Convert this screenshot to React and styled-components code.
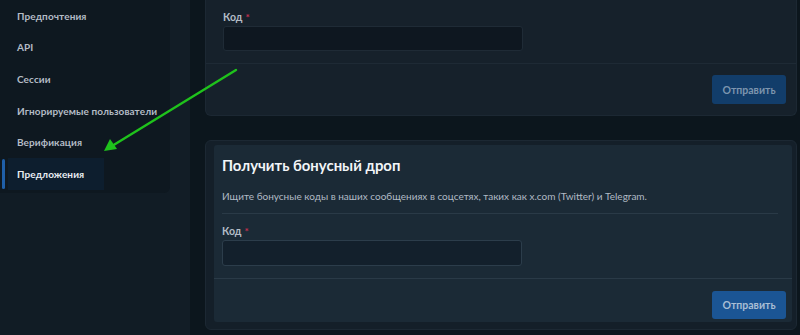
import React from "react";
import styled, { createGlobalStyle } from "styled-components";

const Global = createGlobalStyle`
  html, body { margin: 0; padding: 0; background: #111c25; }
  body { font-family: Lato, "Noto Sans", sans-serif; overflow: hidden; }
  * { box-sizing: border-box; }
`;

const Page = styled.div`
  position: relative;
  width: 800px;
  height: 335px;
  display: flex;
  align-items: flex-start;
  overflow: hidden;
`;

const Sidebar = styled.nav`
  width: 170px;
  margin-top: -8px;
  padding: 8px 0 3px 0;
  background: #0e1820;
  border-radius: 0 0 6px 0;
  display: flex;
  flex-direction: column;
`;

const NavItem = styled.div`
  position: relative;
  height: 31.6px;
  display: flex;
  align-items: center;
  font-size: 10px;
  font-weight: 700;
  letter-spacing: 0.1px;
  color: ${(p) => (p.$active ? "#e8edf3" : "#b4bcc6")};
  background: ${(p) => (p.$active ? "#0d1e2e" : "transparent")};
  margin-left: ${(p) => (p.$active ? "8px" : "0")};
  padding-left: ${(p) => (p.$active ? "9px" : "17px")};
  width: ${(p) => (p.$active ? "96px" : "auto")};
  &::before {
    content: "";
    display: ${(p) => (p.$active ? "block" : "none")};
    position: absolute;
    left: -6px;
    top: 1px;
    bottom: 1px;
    width: 3px;
    border-radius: 2px;
    background: #1f5fa8;
  }
`;

const Gutter = styled.div`
  width: 20px;
  align-self: stretch;
  background: #121d26;
`;

const Main = styled.main`
  flex: 1;
  align-self: stretch;
  background: #0c161d;
  padding: 0 3px 0 15px;
  display: flex;
  flex-direction: column;
  gap: 24px;
`;

const Card = styled.section`
  background: ${(p) => (p.$highlight ? "#141f29" : "#16212b")};
  border: 1px solid #1c2833;
  border-radius: ${(p) => (p.$cut ? "0 0 6px 6px" : "6px")};
  border-top: ${(p) => (p.$cut ? "none" : "1px solid #1c2833")};
  margin-top: ${(p) => (p.$cut ? "-10px" : "0")};
  padding: ${(p) => (p.$highlight ? "4px 4px 7px 8px" : "0")};
`;

const Inner = styled.div`
  background: ${(p) => (p.$highlight ? "#1b2a36" : "transparent")};
  border-radius: 3px;
`;

const Section = styled.div`
  padding: ${(p) => p.$pad || "0 17px"};
`;

const Title = styled.h2`
  margin: 0;
  padding-top: 10px;
  font-size: 14.9px;
  font-weight: 700;
  color: #f2f5f8;
  line-height: 20px;
`;

const Desc = styled.p`
  margin: 0 14px 0 0;
  padding: 14px 0 10px;
  font-size: 10px;
  color: #b1bac5;
  line-height: 14px;
  border-bottom: 1px solid #2a3a47;
`;

const Label = styled.label`
  display: block;
  font-size: 10.5px;
  font-weight: 700;
  color: #b4bdc7;
  line-height: 14px;
  padding-top: ${(p) => p.$top || "0"};
  span { color: #c6304e; margin-left: 3px; font-size: 10px; }
`;

const Input = styled.div`
  margin-top: 2px;
  width: 300px;
  height: ${(p) => (p.$light ? 26 : 25)}px;
  border-radius: 3px;
  background: ${(p) => (p.$light ? "#13202c" : "#0e1720")};
  border: 1px solid ${(p) => (p.$light ? "#2c3d4b" : "#1f2b36")};
`;

const Footer = styled.div`
  border-top: 1px solid ${(p) => (p.$light ? "#2a3a47" : "#1e2a35")};
  margin-top: 12px;
  display: flex;
  justify-content: flex-end;
  padding: ${(p) => p.$pad};
`;

const Button = styled.button`
  width: 74px;
  height: ${(p) => p.$h || 29}px;
  border: none;
  border-radius: 3px;
  background: ${(p) => (p.$dim ? "#123d6a" : "#1b5594")};
  color: ${(p) => (p.$dim ? "#7d95ae" : "#a9bed4")};
  font-family: Lato, "Noto Sans", sans-serif;
  font-size: 10.5px;
  font-weight: 700;
`;

const Arrow = styled.svg`
  position: absolute;
  left: 0;
  top: 0;
  pointer-events: none;
`;

export default function App() {
  const items = [
    "Предпочтения",
    "API",
    "Сессии",
    "Игнорируемые пользователи",
    "Верификация",
  ];
  return (
    <>
      <Global />
      <Page>
        <Sidebar>
          {items.map((t) => (
            <NavItem key={t}>{t}</NavItem>
          ))}
          <NavItem $active>Предложения</NavItem>
        </Sidebar>
        <Gutter />
        <Main>
          <Card $cut>
            <Section $pad="20px 17px 0">
              <Label>
                Код<span>*</span>
              </Label>
              <Input />
            </Section>
            <Footer $pad="11px 10px 11px 0">
              <Button $dim>Отправить</Button>
            </Footer>
          </Card>
          <Card $highlight>
            <Inner $highlight>
              <Section $pad="0 0 0 8px">
                <Title>Получить бонусный дроп</Title>
                <Desc>
                  Ищите бонусные коды в наших сообщениях в соцсетях, таких как x.com (Twitter) и Telegram.
                </Desc>
                <Label $top="10px">
                  Код<span>*</span>
                </Label>
                <Input $light />
              </Section>
              <Footer $light $pad="12px 6px 3px 0">
                <Button $h={28}>Отправить</Button>
              </Footer>
            </Inner>
          </Card>
        </Main>
        <Arrow width="800" height="335" viewBox="0 0 800 335">
          <line x1="236" y1="70" x2="112" y2="146" stroke="#1fc21c" strokeWidth="2.4" strokeLinecap="round" />
          <polygon points="104,151 110,139 117,149" fill="#1fc21c" />
        </Arrow>
      </Page>
    </>
  );
}
